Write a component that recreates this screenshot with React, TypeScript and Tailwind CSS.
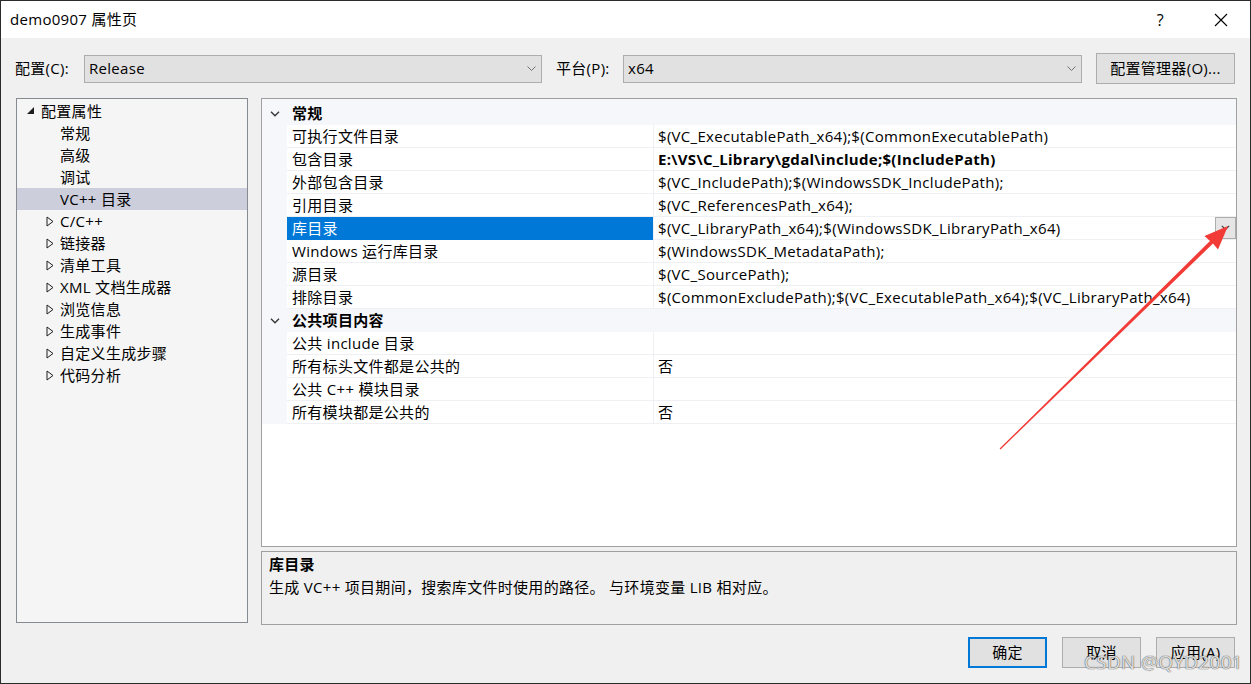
import React from 'react';

const FONT = { fontFamily: '"Open Sans", "Noto Sans CJK SC", sans-serif', letterSpacing: '0.3px' };

const treeItems: { label: string; level: 0 | 1; kind: 'open' | 'closed' | 'leaf'; selected?: boolean }[] = [
  { label: '配置属性', level: 0, kind: 'open' },
  { label: '常规', level: 1, kind: 'leaf' },
  { label: '高级', level: 1, kind: 'leaf' },
  { label: '调试', level: 1, kind: 'leaf' },
  { label: 'VC++ 目录', level: 1, kind: 'leaf', selected: true },
  { label: 'C/C++', level: 1, kind: 'closed' },
  { label: '链接器', level: 1, kind: 'closed' },
  { label: '清单工具', level: 1, kind: 'closed' },
  { label: 'XML 文档生成器', level: 1, kind: 'closed' },
  { label: '浏览信息', level: 1, kind: 'closed' },
  { label: '生成事件', level: 1, kind: 'closed' },
  { label: '自定义生成步骤', level: 1, kind: 'closed' },
  { label: '代码分析', level: 1, kind: 'closed' },
];

type Row =
  | { type: 'cat'; label: string }
  | { type: 'prop'; name: string; value: string; bold?: boolean; selected?: boolean };

const rows: Row[] = [
  { type: 'cat', label: '常规' },
  { type: 'prop', name: '可执行文件目录', value: '$(VC_ExecutablePath_x64);$(CommonExecutablePath)' },
  { type: 'prop', name: '包含目录', value: 'E:\\VS\\C_Library\\gdal\\include;$(IncludePath)', bold: true },
  { type: 'prop', name: '外部包含目录', value: '$(VC_IncludePath);$(WindowsSDK_IncludePath);' },
  { type: 'prop', name: '引用目录', value: '$(VC_ReferencesPath_x64);' },
  { type: 'prop', name: '库目录', value: '$(VC_LibraryPath_x64);$(WindowsSDK_LibraryPath_x64)', selected: true },
  { type: 'prop', name: 'Windows 运行库目录', value: '$(WindowsSDK_MetadataPath);' },
  { type: 'prop', name: '源目录', value: '$(VC_SourcePath);' },
  { type: 'prop', name: '排除目录', value: '$(CommonExcludePath);$(VC_ExecutablePath_x64);$(VC_LibraryPath_x64)' },
  { type: 'cat', label: '公共项目内容' },
  { type: 'prop', name: '公共 include 目录', value: '' },
  { type: 'prop', name: '所有标头文件都是公共的', value: '否' },
  { type: 'prop', name: '公共 C++ 模块目录', value: '' },
  { type: 'prop', name: '所有模块都是公共的', value: '否' },
];

const ComboChevron = () => (
  <svg width="9" height="6" viewBox="0 0 9 6" className="shrink-0">
    <polyline points="0.5,0.5 4.5,4.5 8.5,0.5" fill="none" stroke="#707070" strokeWidth="1" />
  </svg>
);

const Combo: React.FC<{ value: string; width: string }> = ({ value, width }) => (
  <div className={`${width} h-[28px] bg-[#e1e1e1] border border-[#adadad] flex items-center pl-[4px] pr-[5px]`}>
    <span className="flex-1 text-[15px] text-black">{value}</span>
    <ComboChevron />
  </div>
);

const Button: React.FC<{ label: string; primary?: boolean }> = ({ label, primary }) => (
  <div
    className={`w-[79px] h-[31px] bg-[#e1e1e1] flex items-center justify-center text-[15px] text-black ${
      primary ? 'border-2 border-[#0078d7]' : 'border border-[#adadad]'
    }`}
  >
    {label}
  </div>
);

export default function App() {
  return (
    <div style={FONT} className="relative w-[1251px] h-[684px] border border-[#2b2b2b] flex flex-col overflow-hidden text-black">
      {/* title bar */}
      <div className="h-[37px] bg-white flex items-center shrink-0">
        <span className="ml-[9px] text-[15px]">demo0907 属性页</span>
        <div className="flex-1" />
        <span className="text-[16px] mr-[50px]">?</span>
        <svg width="14" height="14" viewBox="0 0 14 14" className="mr-[22px]">
          <path d="M1 1L13 13M13 1L1 13" stroke="#000" strokeWidth="1.1" />
        </svg>
      </div>

      <div className="flex-1 bg-[#f0f0f0] flex flex-col">
        {/* config row */}
        <div className="flex items-center mt-[15px] h-[31px]">
          <span className="ml-[14px] w-[69px] text-[15px]">配置(C):</span>
          <Combo value="Release" width="w-[458px]" />
          <span className="ml-[14px] w-[67px] text-[15px]">平台(P):</span>
          <Combo value="x64" width="w-[459px]" />
          <div className="ml-[14px] w-[139px] h-[31px] bg-[#e1e1e1] border border-[#adadad] flex items-center justify-center text-[15px]">
            配置管理器(O)...
          </div>
        </div>

        <div className="flex mt-[14px] ml-[15px] h-[527px]">
          {/* tree */}
          <div className="w-[232px] h-[525px] bg-[#f5f5f5] border border-[#868a91] pt-[1px]">
            {treeItems.map((it) => (
              <div
                key={it.label}
                className={`h-[22px] flex items-center text-[15px] ${it.level === 0 ? 'pl-[9px]' : 'pl-[28px]'} ${
                  it.selected ? 'bg-[#cccedb]' : ''
                }`}
              >
                <div className="w-[15px] h-[22px] flex items-center shrink-0">
                  {it.kind === 'open' && (
                    <svg width="9" height="9" viewBox="0 0 9 9" className="mt-[-2px]">
                      <polygon points="8,1 8,8 1,8" fill="#1e1e1e" />
                    </svg>
                  )}
                  {it.kind === 'closed' && (
                    <svg width="8" height="11" viewBox="0 0 8 11" className="ml-[1px]">
                      <polygon points="1,1 7,5.5 1,10" fill="none" stroke="#1e1e1e" strokeWidth="1" />
                    </svg>
                  )}
                </div>
                <span className="whitespace-nowrap">{it.label}</span>
              </div>
            ))}
          </div>

          <div className="ml-[13px] w-[976px] flex flex-col">
            {/* property grid */}
            <div className="h-[449px] bg-white border border-[#a0a0a0] flex flex-col">
              <div className="h-[3px] bg-[#f5f7fa]" />
              {rows.map((r, i) =>
                r.type === 'cat' ? (
                  <div key={i} className="h-[23px] bg-[#f5f7fa] flex items-center">
                    <div className="w-[25px] flex justify-center">
                      <svg width="10" height="6" viewBox="0 0 10 6">
                        <polyline points="1,0.8 5,4.8 9,0.8" fill="none" stroke="#333" strokeWidth="1.3" />
                      </svg>
                    </div>
                    <span className="pl-[5px] text-[15px] font-bold">{r.label}</span>
                  </div>
                ) : (
                  <div key={i} className="h-[23px] flex">
                    <div className="w-[25px] bg-[#f5f7fa] shrink-0" />
                    <div
                      className={`w-[366px] shrink-0 flex items-center pl-[5px] text-[15px] border-b ${
                        r.selected ? 'bg-[#0078d7] text-white border-[#0078d7]' : 'border-[#eef0f4]'
                      }`}
                    >
                      {r.name}
                    </div>
                    <div className="flex-1 flex items-center pl-[4px] text-[15px] border-b border-l border-[#eef0f4] whitespace-nowrap">
                      <span className={`flex-1 ${r.bold ? 'font-bold' : ''}`}>{r.value}</span>
                      {r.selected && (
                        <div className="w-[21px] h-[22px] bg-[#e5e5e5] border border-[#adadad] flex items-center justify-center">
                          <svg width="9" height="6" viewBox="0 0 9 6">
                            <polyline points="0.8,0.8 4.5,4.5 8.2,0.8" fill="none" stroke="#404040" strokeWidth="1.2" />
                          </svg>
                        </div>
                      )}
                    </div>
                  </div>
                )
              )}
              <div className="flex-1 bg-white" />
            </div>

            {/* description */}
            <div className="mt-[4px] h-[74px] bg-[#f0f0f0] border border-[#a0a0a0] px-[7px] pt-[1px]">
              <div className="h-[23px] flex items-center text-[15px] font-bold">库目录</div>
              <div className="h-[23px] flex items-center text-[15px]">
                生成 VC++ 项目期间，搜索库文件时使用的路径。 与环境变量 LIB 相对应。
              </div>
            </div>
          </div>
        </div>

        {/* buttons */}
        <div className="flex justify-end mt-[12px] mr-[15px] gap-[15px]">
          <Button label="确定" primary />
          <Button label="取消" />
          <Button label="应用(A)" />
        </div>
      </div>

      {/* annotation arrow */}
      <svg className="absolute left-0 top-0 pointer-events-none" width="1251" height="684">
        <polygon
          points="999.5,448.5 1212,242.5 1217,248.5 1227,225 1203.5,235 1209,240 998.6,447.6"
          fill="#f23b36"
        />
      </svg>

      {/* watermark */}
      <div className="absolute left-[1083px] top-[647px] text-[19px] text-white/80 [text-shadow:0_0_1px_#555,0_0_1px_#555] pointer-events-none">
        CSDN @QYD2001
      </div>
    </div>
  );
}
